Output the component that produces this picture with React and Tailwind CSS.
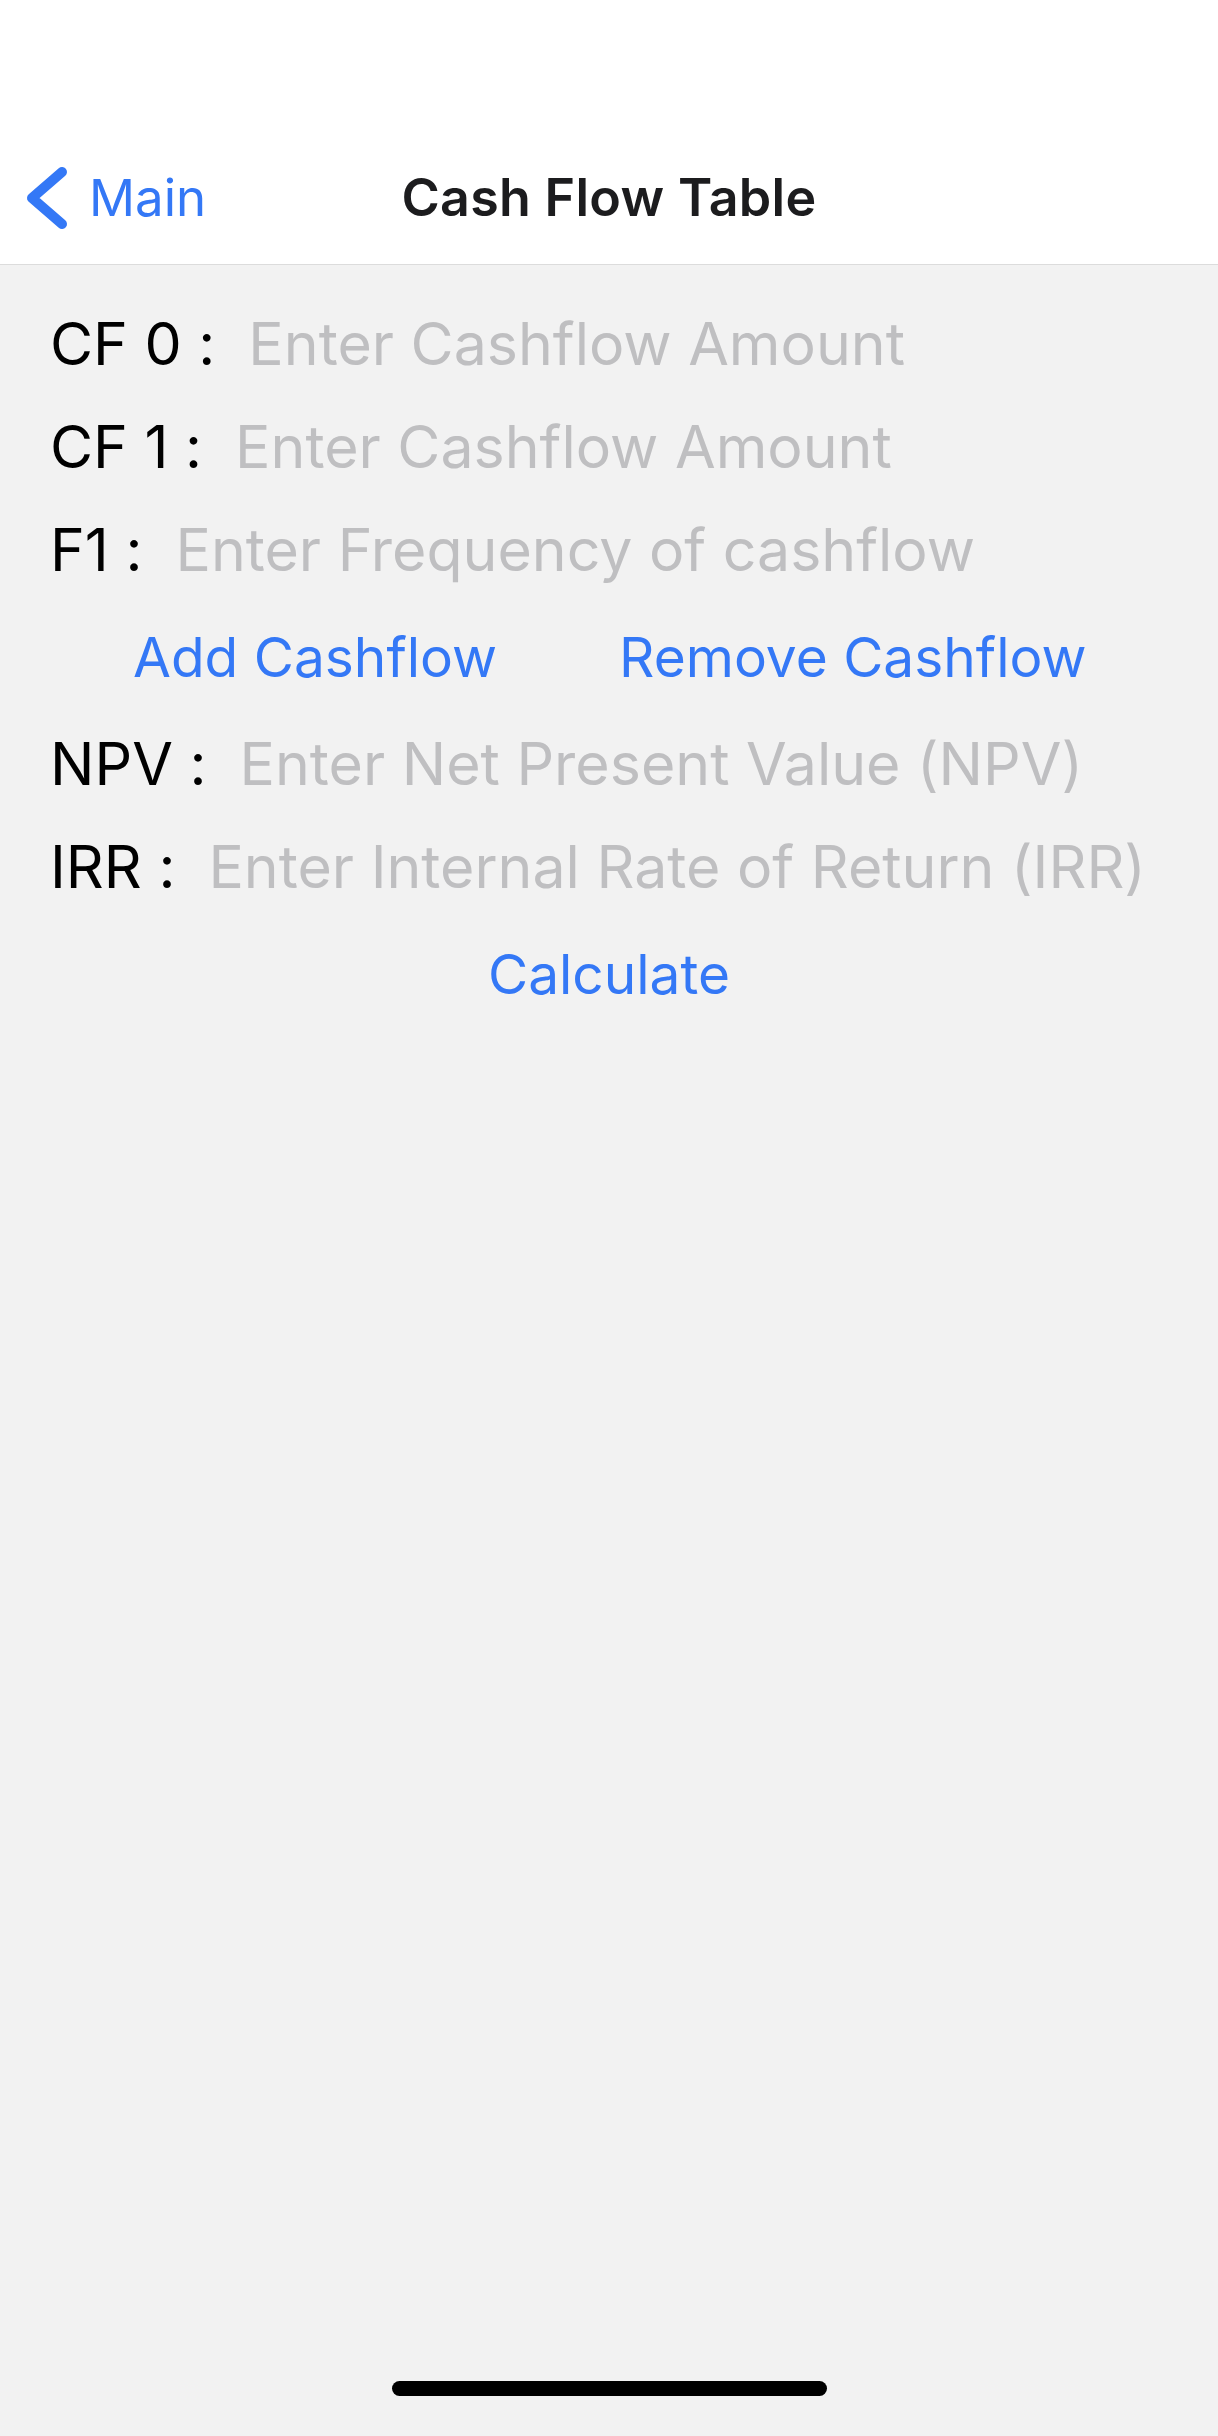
import React, { useState } from 'react';

const font = { fontFamily: 'Inter, "Noto Sans", sans-serif' };

const FieldRow = ({ label, placeholder, value, onChange }) => (
  <div className="h-[103px] flex items-center">
    <span className="text-[59px] text-black whitespace-nowrap">{label}</span>
    <input
      type="text"
      value={value}
      onChange={(e) => onChange(e.target.value)}
      placeholder={placeholder}
      className="ml-[33px] flex-1 min-w-0 bg-transparent outline-none text-[59px] text-black placeholder:text-[#bfbfc1]"
    />
  </div>
);

const App = () => {
  const [values, setValues] = useState({ cf0: '', cf1: '', f1: '', npv: '', irr: '' });
  const set = (key) => (v) => setValues({ ...values, [key]: v });

  return (
    <div className="w-[1218px] min-h-[2436px] bg-[#f2f2f2] flex flex-col [font-feature-settings:'calt'_0]" style={font}>
      {/* Nav bar */}
      <header className="h-[265px] bg-white border-b border-[#dcdcdc] pt-[132px]">
        <div className="h-[132px] grid grid-cols-[1fr_auto_1fr] items-center">
          <button className="flex items-center text-[#3478f6] justify-self-start">
            <svg width="50" height="70" viewBox="0 0 50 70" className="ml-[22px]">
              <polyline points="40,9 10,35 40,61" fill="none" stroke="#3478f6" strokeWidth="10" strokeLinecap="round" strokeLinejoin="round" />
            </svg>
            <span className="ml-[17px] text-[51px]">Main</span>
          </button>
          <h1 className="text-[52px] font-semibold text-[#1c1c1e] tracking-[0.3px]">Cash Flow Table</h1>
          <div />
        </div>
      </header>

      {/* Form */}
      <main className="flex-1 px-[50px] pt-[28px]">
        <FieldRow label="CF 0 :" placeholder="Enter Cashflow Amount" value={values.cf0} onChange={set('cf0')} />
        <FieldRow label="CF 1 :" placeholder="Enter Cashflow Amount" value={values.cf1} onChange={set('cf1')} />
        <FieldRow label="F1 :" placeholder="Enter Frequency of cashflow" value={values.f1} onChange={set('f1')} />

        <div className="h-[111px] flex items-center pl-[83px] text-[55px] text-[#3478f6]">
          <button>Add Cashflow</button>
          <button className="ml-[122px]">Remove Cashflow</button>
        </div>

        <FieldRow label="NPV :" placeholder="Enter Net Present Value (NPV)" value={values.npv} onChange={set('npv')} />
        <FieldRow label="IRR :" placeholder="Enter Internal Rate of Return (IRR)" value={values.irr} onChange={set('irr')} />

        <div className="h-[111px] flex items-center justify-center">
          <button className="text-[55px] text-[#3478f6]">Calculate</button>
        </div>
      </main>

      {/* Home indicator */}
      <div className="h-[86px] flex justify-center">
        <div className="mt-[31px] w-[435px] h-[15px] rounded-full bg-black" />
      </div>
    </div>
  );
};

export default App;
